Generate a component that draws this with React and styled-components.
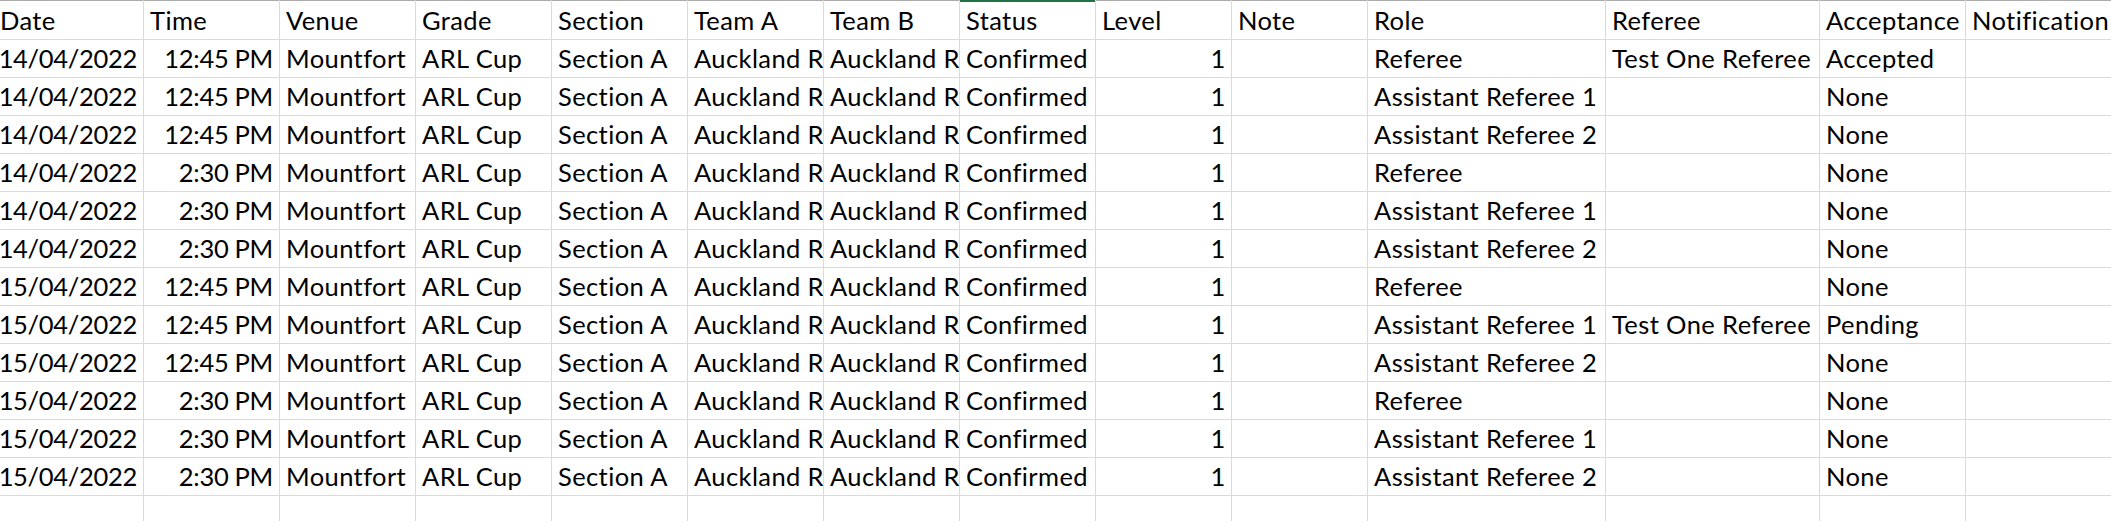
import React from "react";
import styled, { createGlobalStyle } from "styled-components";

const GlobalStyle = createGlobalStyle`
  html, body {
    margin: 0;
    padding: 0;
    background: #ffffff;
    overflow: hidden;
  }
  body {
    font-family: Lato, "Open Sans", sans-serif;
    color: #000000;
  }
`;

const COLS = [144, 136, 136, 136, 136, 136, 136, 136, 136, 136, 238, 214, 146, 220];

const Sheet = styled.div`
  display: grid;
  grid-template-columns: ${COLS.map((c) => `${c}px`).join(" ")};
  grid-template-rows: 40px;
  grid-auto-rows: 38px;
  width: max-content;
  font-family: Lato, "Open Sans", sans-serif;
  font-size: 25.5px;
`;

const Cell = styled.div`
  box-sizing: border-box;
  display: flex;
  align-items: flex-end;
  justify-content: ${(p) => (p.$align === "right" ? "flex-end" : "flex-start")};
  padding: 0 6px 6px ${(p) => (p.$flush ? "0" : "6px")};
  border-right: 1px solid #dadada;
  border-bottom: 1px solid #dadada;
  white-space: nowrap;
  overflow: hidden;
  line-height: 25px;
  letter-spacing: ${(p) => (p.$align === "right" ? "-0.3px" : "0.4px")};
  color: #000;
`;

const HeaderCell = styled(Cell)`
  box-shadow: inset 0 ${(p) => (p.$active ? "2px 0 #217346" : "1px 0 #ababab")};
`;

const headers = [
  "Date",
  "Time",
  "Venue",
  "Grade",
  "Section",
  "Team A",
  "Team B",
  "Status",
  "Level",
  "Note",
  "Role",
  "Referee",
  "Acceptance",
  "Notification",
];

const rawRows = [
  ["14/04/2022", "12:45 PM", "Referee", "Test One Referee", "Accepted"],
  ["14/04/2022", "12:45 PM", "Assistant Referee 1", "", "None"],
  ["14/04/2022", "12:45 PM", "Assistant Referee 2", "", "None"],
  ["14/04/2022", "2:30 PM", "Referee", "", "None"],
  ["14/04/2022", "2:30 PM", "Assistant Referee 1", "", "None"],
  ["14/04/2022", "2:30 PM", "Assistant Referee 2", "", "None"],
  ["15/04/2022", "12:45 PM", "Referee", "", "None"],
  ["15/04/2022", "12:45 PM", "Assistant Referee 1", "Test One Referee", "Pending"],
  ["15/04/2022", "12:45 PM", "Assistant Referee 2", "", "None"],
  ["15/04/2022", "2:30 PM", "Referee", "", "None"],
  ["15/04/2022", "2:30 PM", "Assistant Referee 1", "", "None"],
  ["15/04/2022", "2:30 PM", "Assistant Referee 2", "", "None"],
];

const rightAligned = new Set([0, 1, 8]);

const rows = rawRows.map(([date, time, role, referee, acceptance]) => [
  date,
  time,
  "Mountfort",
  "ARL Cup",
  "Section A",
  "Auckland R",
  "Auckland R",
  "Confirmed",
  "1",
  "",
  role,
  referee,
  acceptance,
  "",
]);

export default function App() {
  return (
    <>
      <GlobalStyle />
      <Sheet>
        {headers.map((h, i) => (
          <HeaderCell key={`h${i}`} $active={h === "Status"} $flush={i === 0}>
            {h}
          </HeaderCell>
        ))}
        {rows.map((row, r) =>
          row.map((v, c) => (
            <Cell
              key={`${r}-${c}`}
              $align={rightAligned.has(c) ? "right" : "left"}
              $flush={c === 0}
            >
              {v}
            </Cell>
          ))
        )}
        {headers.map((_, i) => (
          <Cell key={`e${i}`} $flush={i === 0} />
        ))}
      </Sheet>
    </>
  );
}
